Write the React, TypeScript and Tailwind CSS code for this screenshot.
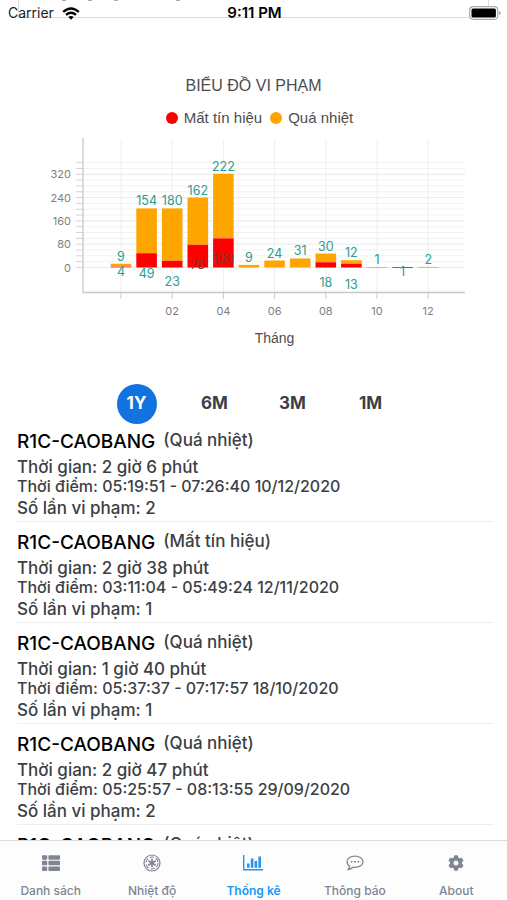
import React, { useState } from 'react';
import { FaThList, FaCog } from 'react-icons/fa';

interface MonthPoint {
  lost: number; // Mất tín hiệu
  hot: number; // Quá nhiệt
  lostLabelY?: number;
}

interface Violation {
  id: number;
  site: string;
  kind: string;
  duration?: string;
  time?: string;
  count?: number;
}

const months: MonthPoint[] = [
  { lost: 4, hot: 9, lostLabelY: 276 },
  { lost: 49, hot: 154, lostLabelY: 278 },
  { lost: 23, hot: 180, lostLabelY: 286 },
  { lost: 78, hot: 162, lostLabelY: 269 },
  { lost: 100, hot: 222, lostLabelY: 263 },
  { lost: 0, hot: 9 },
  { lost: 0, hot: 24 },
  { lost: 0, hot: 31 },
  { lost: 18, hot: 30, lostLabelY: 287 },
  { lost: 13, hot: 12, lostLabelY: 289 },
  { lost: 0, hot: 1 },
  { lost: 1, hot: 0, lostLabelY: 276 },
  { lost: 0, hot: 2 },
];

const violations: Violation[] = [
  { id: 1, site: 'R1C-CAOBANG', kind: 'Quá nhiệt', duration: '2 giờ 6 phút', time: '05:19:51 - 07:26:40 10/12/2020', count: 2 },
  { id: 2, site: 'R1C-CAOBANG', kind: 'Mất tín hiệu', duration: '2 giờ 38 phút', time: '03:11:04 - 05:49:24 12/11/2020', count: 1 },
  { id: 3, site: 'R1C-CAOBANG', kind: 'Quá nhiệt', duration: '1 giờ 40 phút', time: '05:37:37 - 07:17:57 18/10/2020', count: 1 },
  { id: 4, site: 'R1C-CAOBANG', kind: 'Quá nhiệt', duration: '2 giờ 47 phút', time: '05:25:57 - 08:13:55 29/09/2020', count: 2 },
  { id: 5, site: 'R1C-CAOBANG', kind: 'Quá nhiệt' },
];

const ranges = ['1Y', '6M', '3M', '1M'];

// Chart geometry
const ZERO_Y = 267.5;
const UNIT = 23.3 / 80;
const xOf = (month: number) => 121 + month * 25.6;
const yOf = (value: number) => ZERO_Y - value * UNIT;

function ViolationChart() {
  const steps = Array.from({ length: 19 }, (_, i) => i * 20);
  return (
    <svg viewBox="0 128 507 224" className="block w-full" role="img" aria-label="Biểu đồ vi phạm">
      {steps.map(v => (
        <g key={v}>
          <line x1="83" x2="465" y1={yOf(v)} y2={yOf(v)} stroke={v % 80 === 0 ? '#e9e9e9' : '#f2f2f2'} />
          <line x1="76" x2="83" y1={yOf(v)} y2={yOf(v)} stroke="#d4d4d4" />
        </g>
      ))}
      {[0, 2, 4, 6, 8, 10, 12].map(m => (
        <g key={m}>
          <line x1={xOf(m)} x2={xOf(m)} y1="139" y2="292" stroke="#eeeeee" />
          <line x1={xOf(m)} x2={xOf(m)} y1="292" y2="299" stroke="#cccccc" />
          {m > 0 && (
            <text x={xOf(m)} y="315" textAnchor="middle" fontSize="11" fill="#808080">
              {String(m).padStart(2, '0')}
            </text>
          )}
        </g>
      ))}
      {[0, 80, 160, 240, 320].map(v => (
        <text key={v} x="71" y={yOf(v) + 4} textAnchor="end" fontSize="11" fill="#808080">{v}</text>
      ))}
      <path d="M83 138V292.5H465" fill="none" stroke="#c8c8c8" strokeWidth="1.3" />

      {months.map((m, i) => (
        <g key={i}>
          <rect x={xOf(i) - 10.3} width="20.6" y={yOf(m.lost + m.hot)} height={m.hot && Math.max(m.hot * UNIT, 0.8)} fill="#ffa500" />
          <rect x={xOf(i) - 10.3} width="20.6" y={yOf(m.lost)} height={m.lost && Math.max(m.lost * UNIT, 0.8)} fill={i === 0 ? '#f0604a' : '#ff0000'} />
        </g>
      ))}
      {months.map((m, i) => (
        <g key={i} textAnchor="middle" fontSize="12.5" fill="#2a9d8f">
          {m.hot > 0 && <text x={xOf(i)} y={yOf(m.lost + m.hot) - 3}>{m.hot}</text>}
          {m.lost > 0 && (
            <text x={xOf(i)} y={m.lostLabelY} fill={m.lost > 70 ? '#7a3b33' : '#2a9d8f'}>{m.lost}</text>
          )}
        </g>
      ))}
      <text x="274.5" y="343" textAnchor="middle" fontSize="14" fill="#4d4d4d" className="font-['Liberation_Sans',sans-serif]">Tháng</text>
    </svg>
  );
}

function WifiIcon() {
  return (
    <svg viewBox="0 0 18 13" className="h-[13px] w-[18px] text-black" fill="none" stroke="currentColor" strokeWidth="2.3">
      <path d="M1.2 4.9Q9-2 16.8 4.9M4 7.9Q9 3.6 14 7.9" />
      <path d="M9 12.8L6.3 10Q9 7.9 11.7 10Z" fill="currentColor" stroke="none" />
    </svg>
  );
}

function ColdIcon() {
  return (
    <svg viewBox="0 0 18 18" className="size-[18px]" fill="none" stroke="currentColor">
      <circle cx="9" cy="9" r="8" strokeWidth="1.2" />
      <circle cx="9" cy="9" r="6" strokeWidth="1.1" strokeDasharray="4.3 2" />
      <path d="M9 4.7V13.3M5.3 6.85L12.7 11.15M12.7 6.85L5.3 11.15" strokeWidth="1.7" />
    </svg>
  );
}

function ChartIcon() {
  return (
    <svg viewBox="0 0 20 16" className="h-4 w-5" fill="currentColor">
      <path d="M0 0h1.4v14H20v1.4H0zM4 8.5h2.6v4.2H4zM7.8 3.5h2.6v9.2H7.8zM11.6 6h2.6v6.7h-2.6zM15.4 1.5H18v11.2h-2.6z" />
    </svg>
  );
}

function MessageIcon() {
  return (
    <svg viewBox="0 0 18 16" className="h-4 w-[18px]" fill="none" stroke="currentColor" strokeWidth="1.3" strokeLinejoin="round">
      <path d="M9 1.2c4.5 0 8 2.4 8 5.6s-3.5 5.6-8 5.6c-.7 0-1.300-.1-1.900-.2-1.500 1.400-3.300 2.200-5.100 2.400 1-.9 1.600-2 1.800-3.300C2 10.300 1 8.700 1 6.800 1 3.600 4.500 1.200 9 1.200z" />
      <path d="M4.700 6.100h1.800v1.500H4.700zM8.100 6.100h1.800v1.500H8.100zM11.500 6.100h1.800v1.500h-1.800z" fill="currentColor" stroke="none" />
    </svg>
  );
}

const tabs = [
  { label: 'Danh sách', icon: <FaThList size={18} /> },
  { label: 'Nhiệt độ', icon: <ColdIcon /> },
  { label: 'Thống kê', icon: <ChartIcon /> },
  { label: 'Thông báo', icon: <MessageIcon /> },
  { label: 'About', icon: <FaCog size={16} /> },
];

export default function App() {
  const [range, setRange] = useState('1Y');
  const [activeTab, setActiveTab] = useState('Thống kê');

  return (
    <div className="relative flex h-screen flex-col overflow-hidden bg-white font-['Inter',sans-serif] text-[#3c3f44]">
      {/* Status bar, floats over the scrolled content */}
      <div className="absolute inset-x-0 top-0 grid h-[26px] grid-cols-3 items-center pr-1.5 pl-2 text-sm text-black">
        <div className="flex items-center gap-2 text-[#222]">
          Carrier <WifiIcon />
        </div>
        <span className="text-center text-[15px] font-semibold">9:11 PM</span>
        <svg viewBox="0 0 32 14" className="h-3.5 w-8 justify-self-end">
          <rect x="0.7" y="0.7" width="28" height="12.6" rx="3.5" fill="#fff" stroke="#aaa" strokeWidth="1.2" />
          <rect x="2.5" y="2.5" width="24.4" height="9" rx="1.5" fill="#000" />
          <path d="M30 5v4q1.5-.6 1.5-2T30 5" fill="#999" />
        </svg>
      </div>

      <main className="min-h-0 flex-1 overflow-hidden">
        {/* Bottom edge of the card scrolled out of view */}
        <div className="mx-[18px] h-[18px] border border-t-0 border-[#dddddd]">
          <div className="flex gap-[22px] pl-[43px]">
            <i className="h-px w-1 bg-[#aaaaaa]" />
            <i className="h-px w-1 bg-[#aaaaaa]" />
            <i className="h-px w-1 bg-[#aaaaaa]" />
            <i className="ml-9 h-px w-1 bg-[#aaaaaa]" />
          </div>
        </div>

        <section className="pt-[58px]">
          <h1 className="text-center font-['Liberation_Sans',sans-serif] text-base leading-5 text-[#4d4d4d]">BIỂU ĐỒ VI PHẠM</h1>
          <div className="mt-3 flex items-center justify-center gap-2 pl-3 font-['Liberation_Sans',sans-serif] text-[15px] leading-5 text-[#4d4d4d]">
            <span className="flex items-center gap-1.5"><i className="size-3 rounded-full bg-[#ff0000]" />Mất tín hiệu</span>
            <span className="flex items-center gap-1.5"><i className="size-3 rounded-full bg-[#ffa500]" />Quá nhiệt</span>
          </div>
          <ViolationChart />
        </section>

        <div className="mt-8 flex justify-center gap-[38px]">
          {ranges.map(r => (
            <button
              key={r}
              onClick={() => setRange(r)}
              className={`size-10 rounded-full text-[17px] font-bold ${range === r ? 'bg-[#1172e0] text-white' : 'text-[#3c3f44]'}`}
            >
              {r}
            </button>
          ))}
        </div>

        <ul className="pr-[13px] pl-[17px]">
          {violations.map(v => (
            <li key={v.id} className="border-b border-[#eeeeee] pt-[7px] text-[17px] font-medium first:pt-1">
              <div className="mb-px flex items-center gap-2">
                <h2 className="text-[19px] leading-7 text-black">{v.site}</h2>
                <span className="pb-1 leading-6">({v.kind})</span>
              </div>
              {v.duration && <p className="leading-5">Thời gian: {v.duration}</p>}
              {v.time && <p className="text-base leading-[18px]">Thời điểm: {v.time}</p>}
              {v.count && <p className="leading-[26px]">Số lần vi phạm: {v.count}</p>}
            </li>
          ))}
        </ul>
      </main>

      <nav className="grid h-[60px] shrink-0 grid-cols-5 border-t border-[#dcdcdc] bg-[#fdfdfd]">
        {tabs.map(t => (
          <button
            key={t.label}
            onClick={() => setActiveTab(t.label)}
            className={`flex flex-col items-center gap-2.5 pt-3 text-xs ${activeTab === t.label ? 'font-semibold text-[#2196f3]' : 'font-medium text-[#808593]'}`}
          >
            <span className="flex h-5 items-center">{t.icon}</span>
            {t.label}
          </button>
        ))}
      </nav>
    </div>
  );
}
